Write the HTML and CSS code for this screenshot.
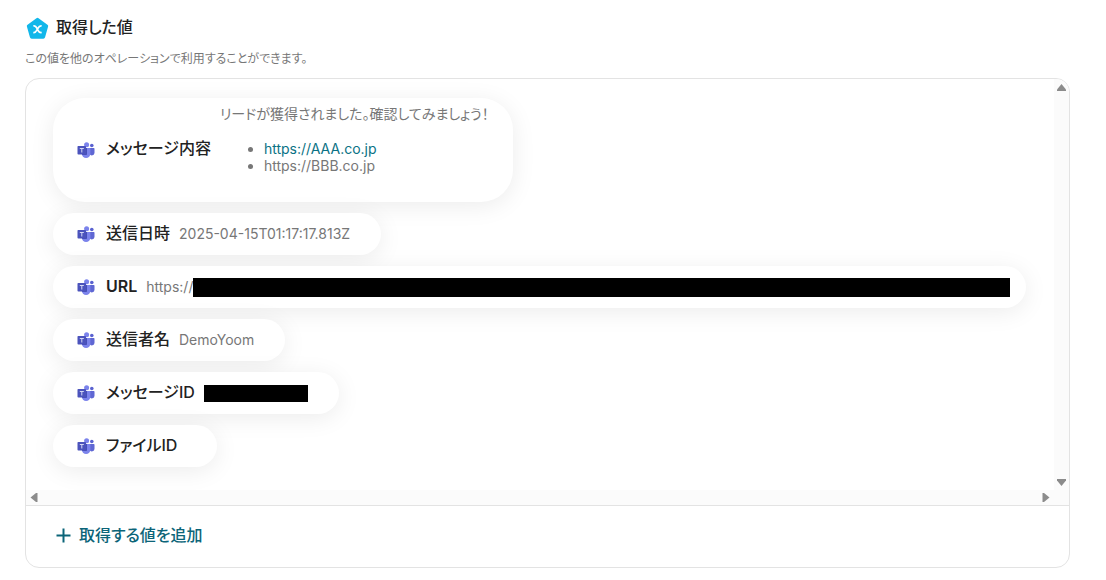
FILE: index.html
```html
<!DOCTYPE html>
<html lang="ja">
<head>
<meta charset="utf-8">
<meta name="viewport" content="width=device-width, initial-scale=1">
<title>取得した値</title>
<link rel="stylesheet" href="styles.css">
</head>
<body>
<svg class="defs" width="0" height="0" aria-hidden="true">
  <symbol id="teams" viewBox="0 0 18 18">
    <circle cx="14.800" cy="4.500" r="1.800" fill="#5a62d0"/>
    <circle cx="9.600" cy="3.700" r="2.500" fill="#7b83eb"/>
    <path d="M12.500 7h4.300c.4 0 .7.300.7.700v4a2.700 2.700 0 0 1-5 1.400z" fill="#5f67d3"/>
    <path d="M5.500 7h7.200c.4 0 .7.300.7.700v4.900a4.300 4.300 0 0 1-8.600 0V7.700c0-.4.300-.7.700-.7z" fill="#7b83eb"/>
    <path d="M5 7h5v6c0 .6-.4 1-1 1H5.300a4.500 4.500 0 0 1-.4-2z" fill="#464eb8"/>
    <rect x=".5" y="5" width="8.500" height="8.500" rx=".8" fill="#4b53bc"/>
    <path d="M2.800 7.500h4M4.800 7.500v4" stroke="#d5d8f5" stroke-width="1"/>
  </symbol>
</svg>
<main class="page">
  <header class="heading">
    <svg class="heading-icon" viewBox="0 0 24 24" aria-hidden="true">
      <path d="M12 3.500 20.500 9.700 17.600 20H6.400L3.500 9.700z" fill="#12b7ea" stroke="#12b7ea" stroke-width="3.500" stroke-linejoin="round"/>
      <path d="M8 9.600c2.800-.7 2.900 1.500 4 3.400s1.500 3.300 4 2.800M16 9.600c-2.500-.5-3.300 1.800-4.100 3.100S10.200 16.300 8 15.800" fill="none" stroke="#fff" stroke-width="1.700"/>
    </svg>
    <h1 class="title">取得した値</h1>
  </header>
  <p class="description">この値を他のオペレーションで利用することができます。</p>

  <section class="panel">
    <div class="viewport">
      <ul class="values">
        <li class="chip chip-rich">
          <svg class="app-icon" aria-hidden="true"><use href="#teams"/></svg>
          <span class="label">メッセージ内容</span>
          <div class="value">
            <p class="message">リードが獲得されました。確認してみましょう！</p>
            <ul class="links">
              <li><a class="link" href="#">https://AAA.co.jp</a></li>
              <li>https://BBB.co.jp</li>
            </ul>
          </div>
        </li>
        <li class="chip">
          <svg class="app-icon" aria-hidden="true"><use href="#teams"/></svg>
          <span class="label">送信日時</span>
          <span class="value">2025-04-15T01:17:17.813Z</span>
        </li>
        <li class="chip chip-wide">
          <svg class="app-icon" aria-hidden="true"><use href="#teams"/></svg>
          <span class="label label-latin">URL</span>
          <span class="value">https://</span>
          <span class="mask mask-fill"></span>
        </li>
        <li class="chip">
          <svg class="app-icon" aria-hidden="true"><use href="#teams"/></svg>
          <span class="label">送信者名</span>
          <span class="value">DemoYoom</span>
        </li>
        <li class="chip">
          <svg class="app-icon" aria-hidden="true"><use href="#teams"/></svg>
          <span class="label">メッセージID</span>
          <span class="mask mask-short"></span>
        </li>
        <li class="chip">
          <svg class="app-icon" aria-hidden="true"><use href="#teams"/></svg>
          <span class="label">ファイルID</span>
          <span class="value"></span>
        </li>
      </ul>
      <div class="scroll-y" aria-hidden="true">
        <svg class="arrow" viewBox="0 0 9 7"><path d="M4.500 0 9 5.500V7H0V5.500z"/></svg>
        <svg class="arrow" viewBox="0 0 9 7"><path d="M4.500 7 0 1.500V0h9v1.500z"/></svg>
      </div>
      <div class="scroll-x" aria-hidden="true">
        <svg class="arrow-side" viewBox="0 0 7 9"><path d="M0 4.500 5.500 0H7v9H5.500z"/></svg>
        <svg class="arrow-side" viewBox="0 0 7 9"><path d="M7 4.500 1.500 9H0V0h1.500z"/></svg>
      </div>
    </div>
    <footer class="footer">
      <button class="add" type="button">
        <svg class="plus" viewBox="0 0 15 15" aria-hidden="true"><path d="M7.500 .5v14M.5 7.500h14" stroke="currentColor" stroke-width="2"/></svg>
        取得する値を追加
      </button>
    </footer>
  </section>
</main>
</body>
</html>
```
FILE: styles.css
```css
* { box-sizing: border-box; }

body {
  margin: 0;
  background: #fff;
  color: #222;
  font-family: Inter, "Noto Sans CJK JP", sans-serif;
  font-feature-settings: "palt";
}

h1, p, ul { margin: 0; padding: 0; }

.defs { position: absolute; }

.page { padding: 16px 36px 12px 25px; }

.heading { display: flex; align-items: center; gap: 6px; height: 24px; }
.heading-icon { width: 25px; height: 25px; }
.title { padding-bottom: 2px; font-size: 16px; line-height: 24px; font-weight: 500; }

.description {
  margin: 9px 0;
  color: #777;
  font-size: 12px;
  line-height: 20px;
}

.panel {
  border: 1px solid #e3e3e3;
  border-radius: 14px;
  overflow: hidden;
}

.viewport {
  display: grid;
  grid-template-columns: minmax(0, 1fr) 15px;
  grid-template-rows: auto 15px;
}

.values {
  display: flex;
  flex-direction: column;
  align-items: flex-start;
  gap: 11px;
  padding: 19px 28px 23px 27px;
  overflow: hidden;
  list-style: none;
}

.chip {
  display: flex;
  align-items: center;
  min-height: 42px;
  padding: 0 31px 0 24px;
  border-radius: 32px;
  background: #fff;
  box-shadow: 0 4px 24px rgba(0, 0, 0, 0.08);
}
.chip-rich { padding: 7px 24px 12px; }
.chip-wide { align-self: stretch; padding-right: 16px; }

.app-icon { flex: none; width: 18px; height: 18px; margin-right: 11px; }
.chip-rich .app-icon { margin-top: 4px; }

.label {
  padding-bottom: 3px;
  font-size: 16px;
  line-height: 24px;
  font-weight: 500;
}
.label-latin { font-weight: 600; }
.chip-rich .label { padding-bottom: 0; }

.value {
  margin-left: 9px;
  padding-bottom: 2px;
  color: #777;
  font-size: 14px;
  line-height: 17px;
}
.chip-rich .value { padding-bottom: 0; }

.links { margin: 18px 0 16px; padding-left: 44px; list-style: disc; }
.link { color: #0b7285; text-decoration: none; }

.mask { background: #000; }
.mask-fill { flex: 1; height: 19px; }
.mask-short { width: 104px; height: 17px; margin-left: 9px; }

.scroll-y {
  display: flex;
  flex-direction: column;
  align-items: center;
  justify-content: space-between;
  padding: 5px 0 4px;
  background: #fbfbfb;
}
.scroll-x {
  grid-column: 1 / -1;
  display: flex;
  align-items: center;
  justify-content: space-between;
  padding: 0 19px 0 4px;
  background: #fbfbfb;
}
.arrow { width: 9px; height: 7px; fill: #8b8b8b; }
.arrow-side { width: 8px; height: 9px; fill: #8b8b8b; }

.footer { padding: 17px 30px 20px; border-top: 1px solid #e3e3e3; }

.add {
  display: flex;
  align-items: center;
  gap: 8px;
  padding: 0;
  border: 0;
  background: none;
  color: #0b6478;
  font: inherit;
  font-feature-settings: inherit;
  font-size: 16px;
  line-height: 24px;
  font-weight: 500;
  cursor: pointer;
}
.plus { width: 15px; height: 15px; }
```
